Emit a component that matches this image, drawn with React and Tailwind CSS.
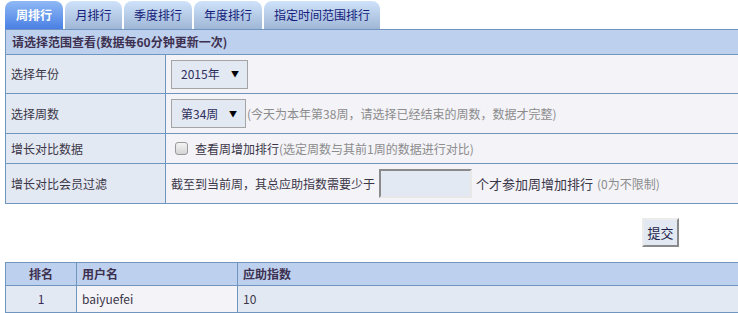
import React from "react";

const tabs = [
  { label: "周排行", w: "w-[58px]", active: true },
  { label: "月排行", w: "w-[57px]" },
  { label: "季度排行", w: "w-[68px]" },
  { label: "年度排行", w: "w-[68px]" },
  { label: "指定时间范围排行", w: "w-[116px]" },
];

function FakeSelect({ value, width }) {
  return (
    <div
      className={`flex h-[29px] items-center justify-between border border-[#a4a4a4] bg-[#e3e9f2] pl-[9px] pr-[8px] text-[#2e2e5e] ${width}`}
    >
      <span>{value}</span>
      <span className="text-[8px] text-black">▼</span>
    </div>
  );
}

function Row({ label, height, children, last }) {
  return (
    <div className={`flex ${height} ${last ? "" : "border-b border-[#7096c0]"}`}>
      <div className="flex w-[160px] shrink-0 items-center border-r border-[#7096c0] bg-[#e3e9f2] pl-[5px]">
        {label}
      </div>
      <div className="flex flex-1 items-center bg-[#f3f3f8] pl-[5px]">{children}</div>
    </div>
  );
}

export default function App() {
  return (
    <div
      className="w-[738px] h-[313px] overflow-hidden bg-white text-[12px] text-[#3b3648]"
      style={{ fontFamily: '"Noto Sans CJK SC", "Noto Sans", sans-serif' }}
    >
      <div className="w-[760px] pl-[5px]">
        {/* tabs */}
        <div className="flex gap-[2px] pt-[1px]">
          {tabs.map((t) => (
            <div
              key={t.label}
              className={`flex h-[28px] items-center justify-center rounded-t-[8px] ${t.w} ${
                t.active
                  ? "bg-gradient-to-b from-[#8fb8f4] to-[#4a80e4] font-bold text-white"
                  : "bg-gradient-to-b from-[#cfe2fa] to-[#9fb7d6] text-[#141a7a]"
              }`}
            >
              {t.label}
            </div>
          ))}
        </div>

        {/* form */}
        <div className="border-l border-t border-b border-[#7096c0]">
          <div className="flex h-[25px] items-center border-b border-[#7096c0] bg-[#bdd0ed] pl-[6px] font-bold text-[#3d3050]">
            请选择范围查看(数据每60分钟更新一次)
          </div>
          <Row label="选择年份" height="h-[39px]">
            <FakeSelect value="2015年" width="w-[77px]" />
          </Row>
          <Row label="选择周数" height="h-[40px]">
            <FakeSelect value="第34周" width="w-[75px]" />
            <span className="ml-[1px] text-[#8c8c8c]">(今天为本年第38周，请选择已经结束的周数，数据才完整)</span>
          </Row>
          <Row label="增长对比数据" height="h-[30px]">
            <div className="ml-[4px] h-[13px] w-[13px] rounded-[3px] border border-[#9a9a9a] bg-gradient-to-b from-[#f4f4f4] to-[#d4d4d4]" />
            <span className="ml-[7px]">查看周增加排行</span>
            <span className="text-[#8c8c8c]">(选定周数与其前1周的数据进行对比)</span>
          </Row>
          <Row label="增长对比会员过滤" height="h-[39px]" last>
            <span>截至到当前周，其总应助指数需要少于</span>
            <div className="ml-[4px] h-[29px] w-[93px] border-2 border-t-[#8a8a8a] border-l-[#8a8a8a] border-r-[#e8e8e8] border-b-[#e8e8e8] bg-[#e3e9f2]" />
            <span className="ml-[4px] text-[13px]">个才参加周增加排行</span>
            <span className="ml-[4px] text-[#8c8c8c]">(0为不限制)</span>
          </Row>
        </div>

        {/* submit */}
        <div className="flex w-[674px] justify-end pt-[14px]">
          <button className="h-[29px] w-[37px] border-2 border-t-[#ececec] border-l-[#ececec] border-r-[#8a8a8a] border-b-[#8a8a8a] bg-[#e3e9f2] text-[13px] text-[#1e1e4a]">
            提交
          </button>
        </div>

        {/* result table */}
        <div className="mt-[15px] border-l border-t border-[#7096c0]">
          <div className="flex h-[23px] border-b border-[#7096c0] bg-[#bdd0ed] font-bold text-[#3d3050]">
            <div className="flex w-[71px] items-center justify-center border-r border-[#7096c0]">排名</div>
            <div className="flex w-[161px] items-center border-r border-[#7096c0] pl-[5px]">用户名</div>
            <div className="flex flex-1 items-center pl-[5px]">应助指数</div>
          </div>
          <div className="flex h-[27px] border-b border-[#7096c0]">
            <div className="flex w-[71px] items-center justify-center border-r border-[#7096c0] bg-[#e3e9f2] text-[#3d2a5a]">1</div>
            <div className="flex w-[161px] items-center border-r border-[#7096c0] bg-[#f3f3f8] pl-[5px]">baiyuefei</div>
            <div className="flex flex-1 items-center bg-[#e3e9f2] pl-[5px]">10</div>
          </div>
        </div>
      </div>
    </div>
  );
}
